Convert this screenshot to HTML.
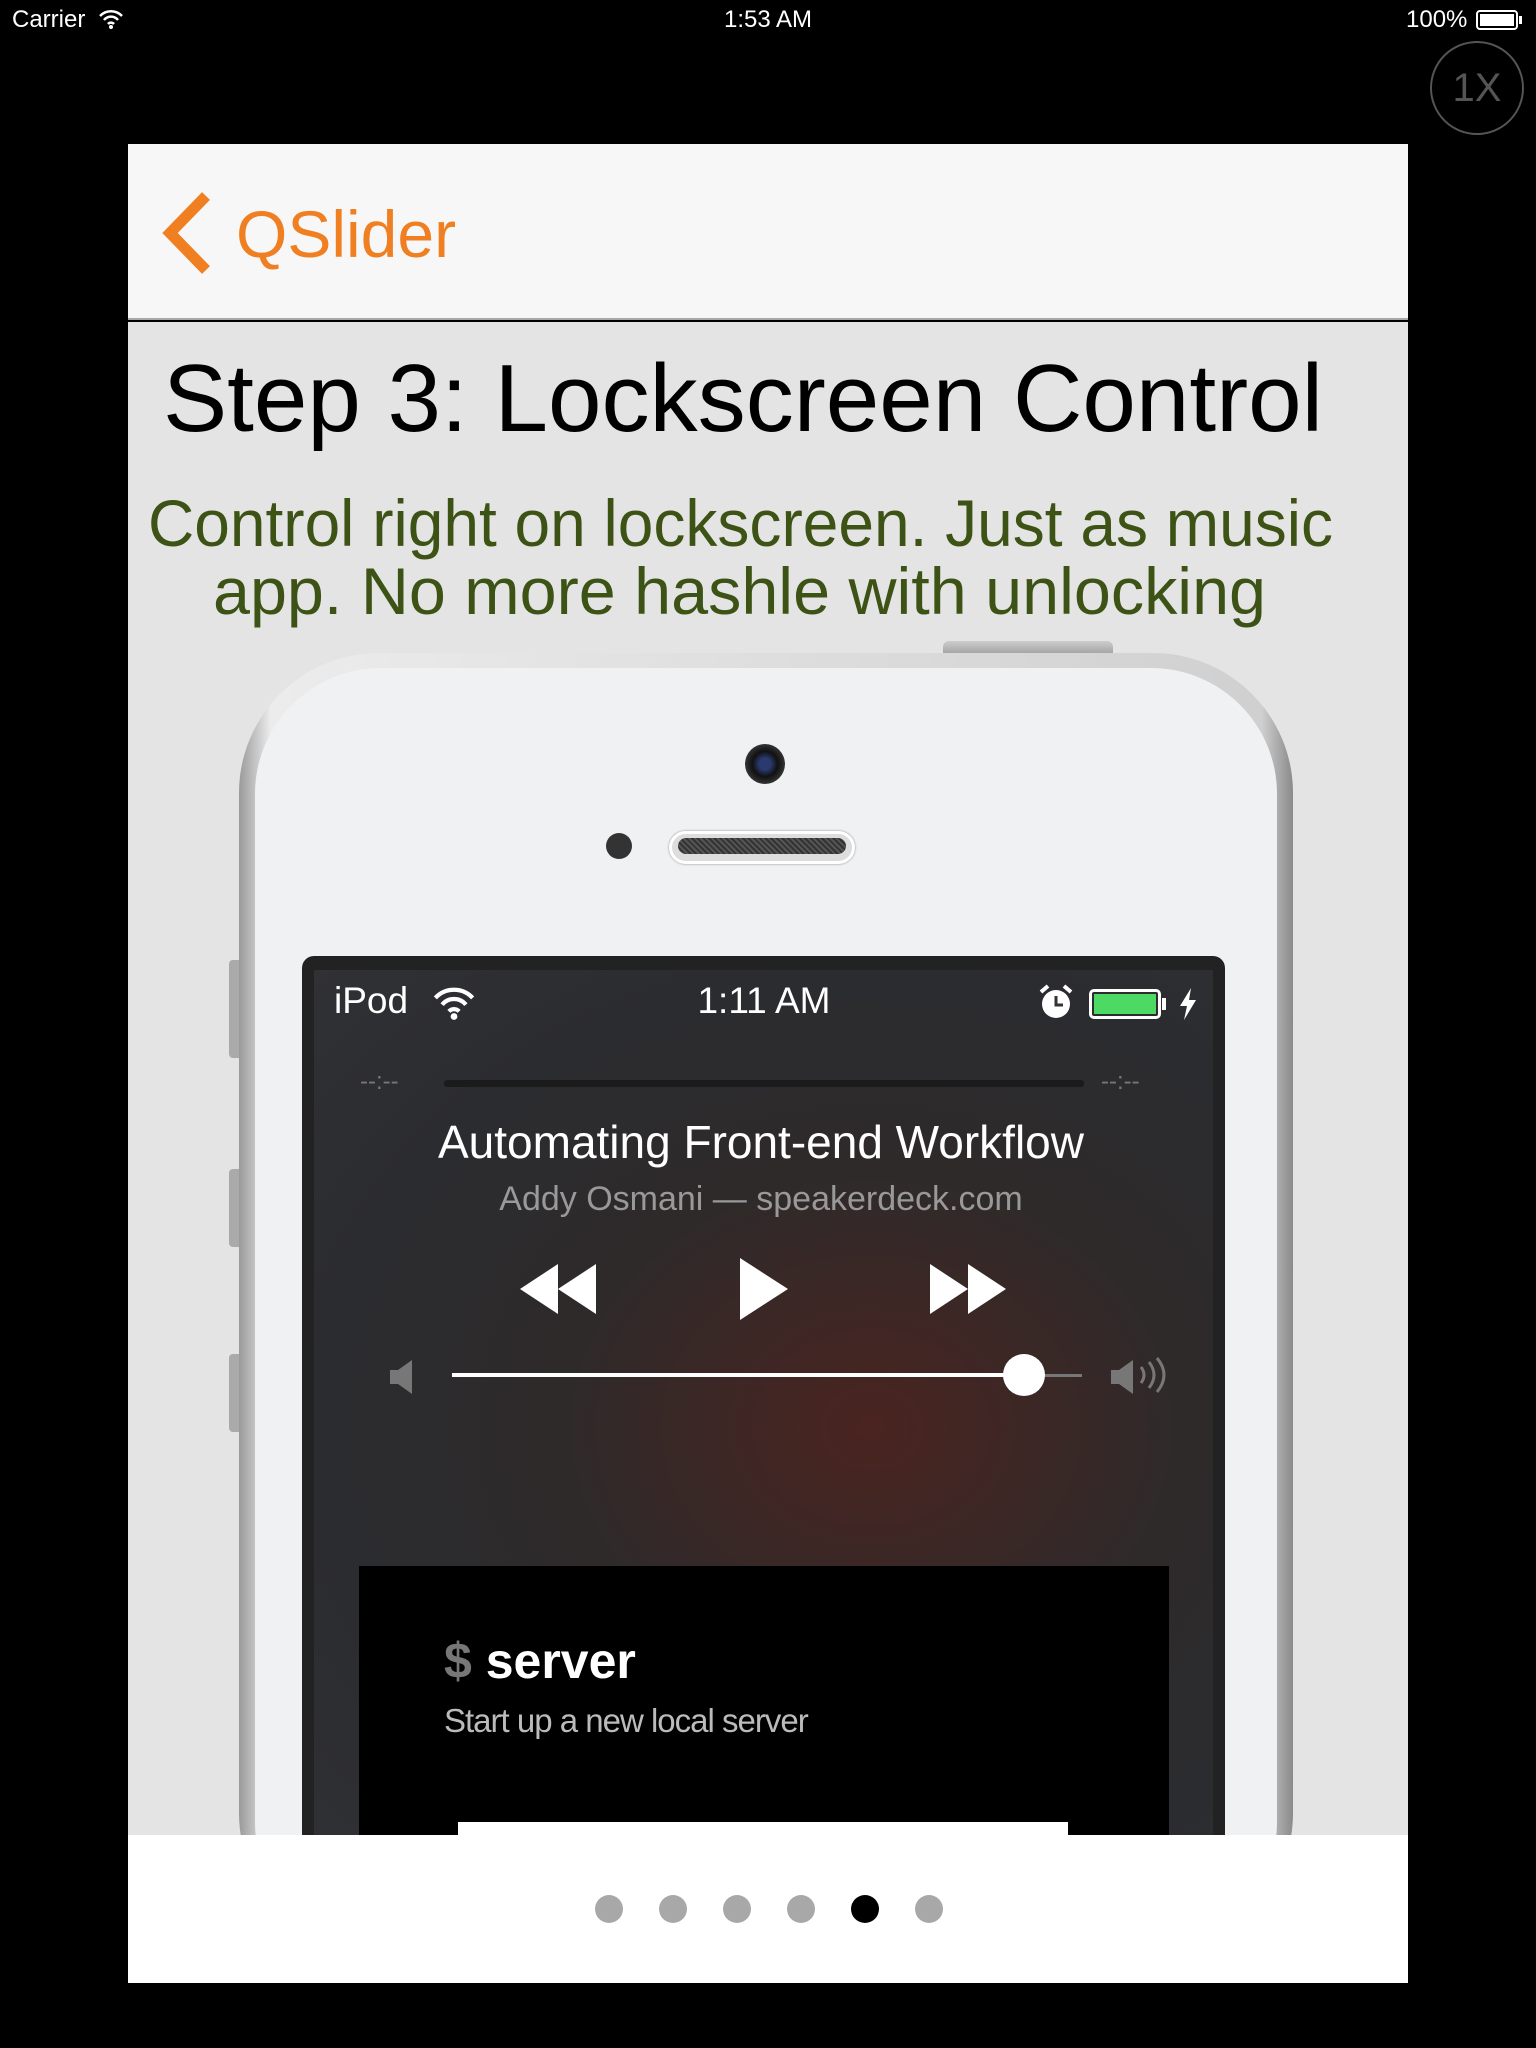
<!DOCTYPE html>
<html><head><meta charset="utf-8"><style>
*{margin:0;padding:0;box-sizing:border-box}
body{width:1536px;height:2048px;background:#000;position:relative;overflow:hidden;font-family:"Liberation Sans",sans-serif}
.a{position:absolute}
</style></head><body>
<div class="a" style="left:12px;top:6px;color:#fff;font-size:24px">Carrier</div>
<svg class="a" style="left:98px;top:9px" width="26" height="20" viewBox="0 0 26 20"><path d="M2 7a15 15 0 0 1 22 0M6 11a9 9 0 0 1 14 0M10 15a4 4 0 0 1 6 0" stroke="#fff" stroke-width="2.5" fill="none"/><circle cx="13" cy="18" r="2" fill="#fff"/></svg>
<div class="a" style="left:0;width:1536px;text-align:center;top:6px;color:#fff;font-size:24px">1:53 AM</div>
<div class="a" style="left:1406px;top:6px;color:#fff;font-size:24px">100%</div>
<div class="a" style="left:1476px;top:10px;width:42px;height:20px;border:2px solid #fff;border-radius:4px;padding:2px"><div style="background:#fff;width:100%;height:100%"></div></div>
<div class="a" style="left:1519px;top:16px;width:3px;height:8px;background:#fff"></div>
<div class="a" style="left:1430px;top:41px;width:94px;height:94px;border:2px solid #555;border-radius:50%;color:#555;font-size:40px;text-align:center;line-height:90px">1X</div>

<div class="a" style="left:128px;top:144px;width:1280px;height:176px;background:#f7f7f7;border-bottom:2px solid #a8a8a8"></div>
<svg class="a" style="left:158px;top:190px" width="56" height="86"><path d="M48 6 L12 43 L48 80" stroke="#f07f21" stroke-width="11" fill="none"/></svg>
<div class="a" style="left:236px;top:196px;color:#f07f21;font-size:66px">QSlider</div>

<div class="a" style="left:128px;top:322px;width:1280px;height:1513px;background:#e4e4e4;overflow:hidden">
<svg class="a" style="left:0;top:0" width="1280" height="320">
<text x="35" y="109" font-size="96" textLength="1160" lengthAdjust="spacingAndGlyphs" fill="#000" font-family="Liberation Sans">Step 3: Lockscreen Control</text>
<text x="20" y="224" font-size="66" textLength="1185" lengthAdjust="spacingAndGlyphs" fill="#3d5316" font-family="Liberation Sans">Control right on lockscreen. Just as music</text>
<text x="85" y="292" font-size="66" textLength="1053" lengthAdjust="spacingAndGlyphs" fill="#3d5316" font-family="Liberation Sans">app. No more hashle with unlocking</text>
</svg>
<div class="a" style="left:815px;top:319px;width:170px;height:16px;background:linear-gradient(#ccc,#999);border-radius:6px 6px 0 0"></div>
<div class="a" style="left:101px;top:638px;width:14px;height:98px;background:#aaa;border-radius:4px"></div>
<div class="a" style="left:101px;top:847px;width:14px;height:78px;background:#aaa;border-radius:4px"></div>
<div class="a" style="left:101px;top:1032px;width:14px;height:78px;background:#aaa;border-radius:4px"></div>
<div class="a" style="left:111px;top:331px;width:1054px;height:1300px;border-radius:140px;background:linear-gradient(90deg,#9a9a9a,#ececec 3%,#d0d0d0 97%,#8a8a8a)"></div>
<div class="a" style="left:127px;top:346px;width:1022px;height:1280px;border-radius:126px;background:#f0f1f3"></div>
<div class="a" style="left:617px;top:422px;width:40px;height:40px;border-radius:50%;background:radial-gradient(circle,#2a3a70 20%,#111 45%,#333 70%,#ccc 75%)"></div>
<div class="a" style="left:478px;top:511px;width:26px;height:26px;border-radius:50%;background:#333"></div>
<div class="a" style="left:541px;top:509px;width:186px;height:33px;border-radius:17px;background:#ddd;border:3px solid #fff;box-shadow:0 0 2px #888"><div style="margin:4px 6px;height:16px;border-radius:8px;background:repeating-linear-gradient(45deg,#333 0 2px,#555 2px 4px)"></div></div>
<div class="a" style="left:174px;top:634px;width:923px;height:900px;border-radius:12px;background:#222"></div>
<div class="a" style="left:186px;top:648px;width:899px;height:880px;background:radial-gradient(ellipse at 62% 52%,#4a2420 0%,#2e2a2a 40%,#2b2c30 70%,#303134 100%)"></div>
<div class="a" style="left:206px;top:658px;color:#fff;font-size:37px">iPod</div>
<svg class="a" style="left:304px;top:664px" width="44" height="34" viewBox="0 0 26 20"><path d="M2 7a15 15 0 0 1 22 0M6 11a9 9 0 0 1 14 0M10 15a4 4 0 0 1 6 0" stroke="#fff" stroke-width="2.5" fill="none"/><circle cx="13" cy="18" r="2" fill="#fff"/></svg>
<div class="a" style="left:536px;width:200px;text-align:center;top:658px;color:#fff;font-size:37px">1:11 AM</div>
<svg class="a" style="left:908px;top:660px" width="40" height="40"><circle cx="20" cy="22" r="14" fill="#fff"/><path d="M20 14 V23 H27" stroke="#333" stroke-width="3" fill="none"/><path d="M5 10 l7-6 M35 10 l-7-6" stroke="#fff" stroke-width="4"/></svg>
<div class="a" style="left:961px;top:667px;width:72px;height:30px;border:3px solid #fff;border-radius:5px;padding:2px"><div style="background:#4cd964;width:100%;height:100%"></div></div>
<div class="a" style="left:1034px;top:676px;width:4px;height:12px;background:#fff"></div>
<svg class="a" style="left:1050px;top:666px" width="20" height="32"><path d="M13 0 L2 18 H9 L6 32 L18 12 H11Z" fill="#fff"/></svg>
<div class="a" style="left:232px;top:746px;color:#777;font-size:24px">--:--</div>
<div class="a" style="left:973px;top:746px;color:#777;font-size:24px">--:--</div>
<div class="a" style="left:316px;top:758px;width:640px;height:7px;background:#1b1b1b;border-radius:3px"></div>
<div class="a" style="left:0;width:1266px;text-align:center;top:793px;color:#fff;font-size:46px">Automating Front-end Workflow</div>
<div class="a" style="left:0;width:1266px;text-align:center;top:858px;color:#999;font-size:34px">Addy Osmani — speakerdeck.com</div>
<svg class="a" style="left:390px;top:934px" width="520" height="66"><path d="M2 33 L40 8 V58Z M40 33 L78 8 V58Z" fill="#fff"/><path d="M222 2 L270 33 L222 64Z" fill="#fff"/><path d="M412 8 L450 33 L412 58Z M450 8 L488 33 L450 58Z" fill="#fff"/></svg>
<svg class="a" style="left:258px;top:1028px" width="800" height="52"><g transform="translate(0,7)"><path d="M4 13 H12 L26 3 V37 L12 27 H4Z" fill="#777"/><rect x="66" y="16" width="576" height="4" fill="#fff"/><rect x="642" y="17" width="54" height="3" fill="#777"/><circle cx="638" cy="18" r="21" fill="#fff"/><path d="M725 13 H733 L747 3 V37 L733 27 H725Z" fill="#777"/><path d="M755 10 q6 8 0 16 M763 5 q10 13 0 26 M771 1 q14 17 0 34" stroke="#777" stroke-width="3" fill="none"/></g></svg>
<div class="a" style="left:231px;top:1244px;width:810px;height:300px;background:#000"></div>
<div class="a" style="left:316px;top:1310px;color:#777;font-size:50px;font-weight:bold">$ <span style="color:#fff">server</span></div>
<div class="a" style="left:316px;top:1380px;color:#bbb;font-size:33px;letter-spacing:-1px">Start up a new local server</div>
<div class="a" style="left:330px;top:1500px;width:610px;height:40px;background:#fff"></div>
</div>

<div class="a" style="left:128px;top:1835px;width:1280px;height:148px;background:#fff"></div>
<div class="a" style="left:595px;top:1895px;width:28px;height:28px;border-radius:50%;background:#a8a8a8"></div>
<div class="a" style="left:659px;top:1895px;width:28px;height:28px;border-radius:50%;background:#a8a8a8"></div>
<div class="a" style="left:723px;top:1895px;width:28px;height:28px;border-radius:50%;background:#a8a8a8"></div>
<div class="a" style="left:787px;top:1895px;width:28px;height:28px;border-radius:50%;background:#a8a8a8"></div>
<div class="a" style="left:851px;top:1895px;width:28px;height:28px;border-radius:50%;background:#000"></div>
<div class="a" style="left:915px;top:1895px;width:28px;height:28px;border-radius:50%;background:#a8a8a8"></div>
</body></html>
